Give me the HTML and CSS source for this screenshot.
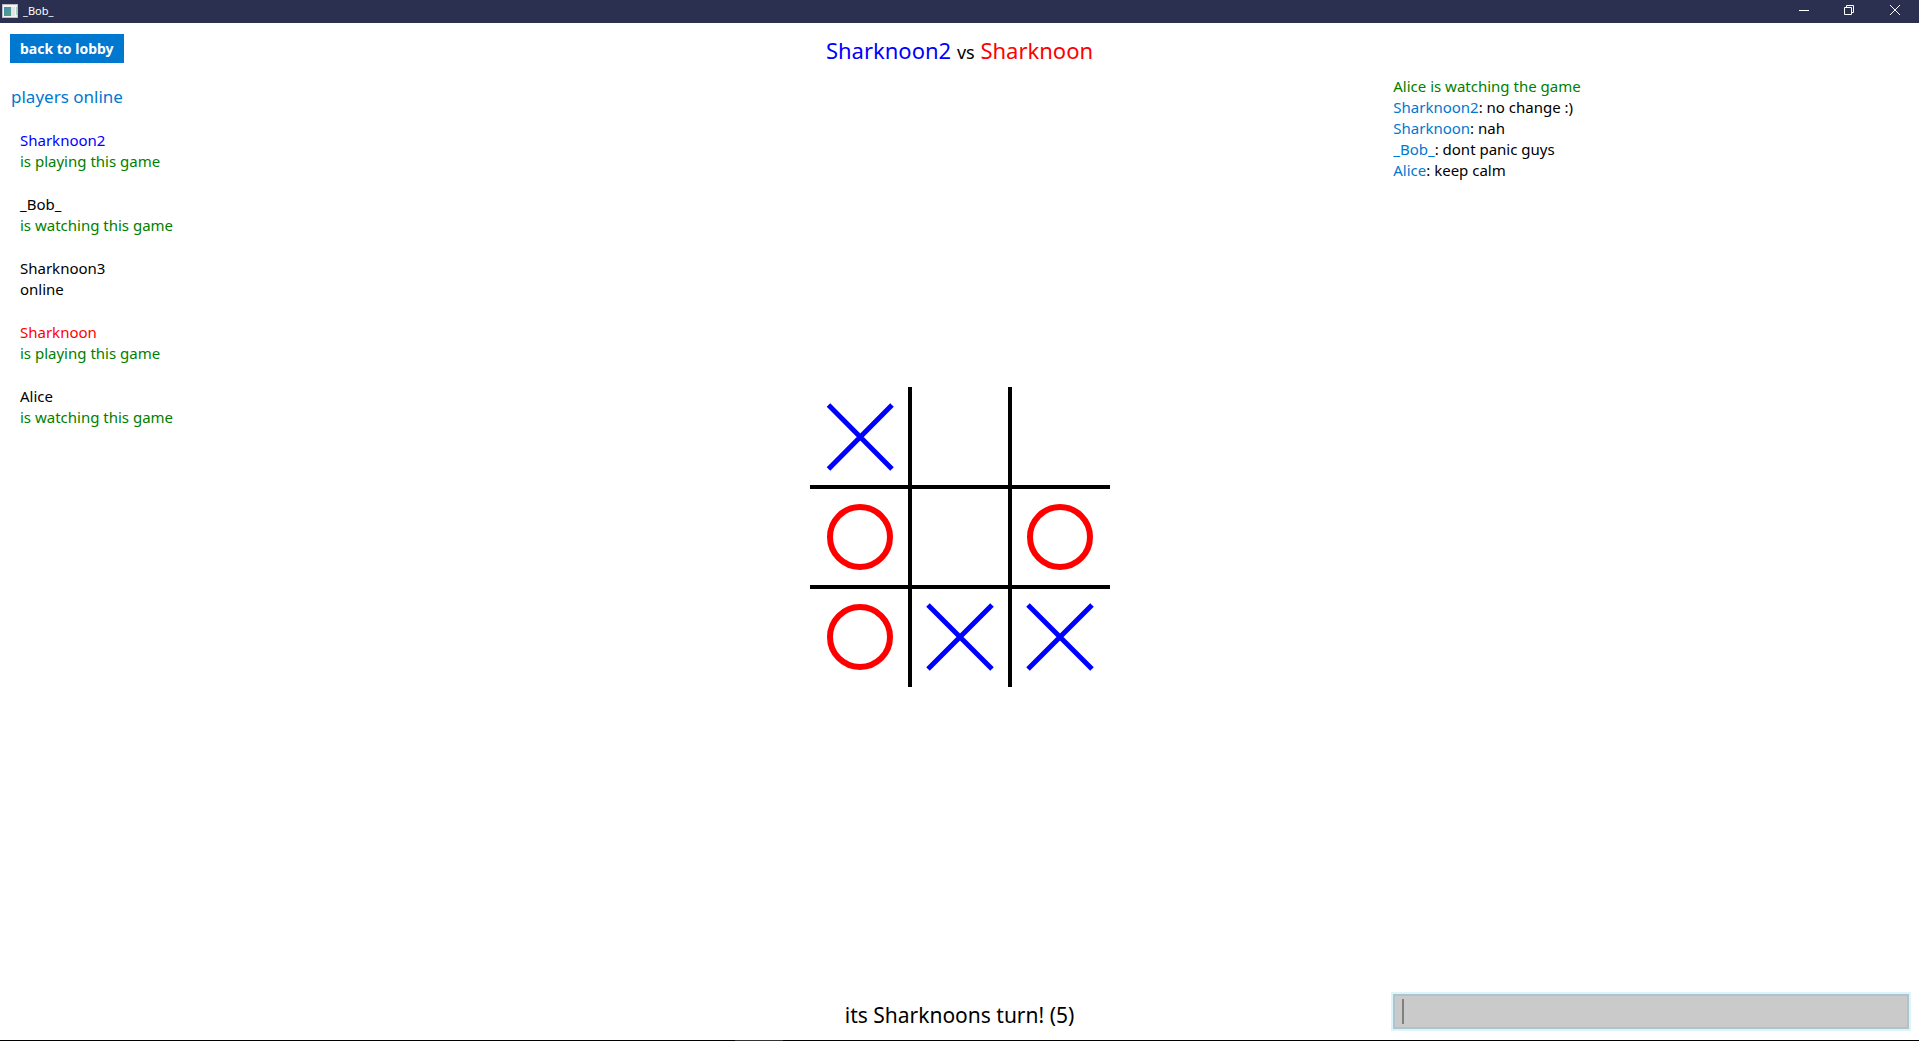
FILE: index.html
```html
<!DOCTYPE html>
<html lang="en">
<head>
<meta charset="utf-8">
<title>_Bob_</title>
<link rel="stylesheet" href="styles.css">
</head>
<body>
<header class="titlebar">
  <svg class="app-icon" width="16" height="14" viewBox="0 0 16 14" aria-hidden="true">
    <defs><linearGradient id="pane" x1="0" y1="0" x2="1" y2="1"><stop offset="0" stop-color="#4d86b8"/><stop offset="1" stop-color="#4fa47c"/></linearGradient></defs>
    <rect width="16" height="14" fill="#b9bcc4"/>
    <rect x="1" y="1" width="14" height="12" fill="#f4f4f4"/>
    <rect x="2" y="3" width="7" height="9" fill="url(#pane)"/>
    <rect x="9" y="3" width="4" height="9" fill="#e3e4e6"/>
    <rect x="14" y="3" width="1" height="8" fill="#a9d0c0"/>
  </svg>
  <span class="window-title">_Bob_</span>
  <div class="window-controls">
    <button class="window-button" aria-label="Minimize"><svg width="10" height="10" viewBox="0 0 10 10"><path d="M0 5.5H10"/></svg></button>
    <button class="window-button" aria-label="Restore"><svg width="10" height="10" viewBox="0 0 10 10"><path d="M.5 2.5H7.500V9.500H.5ZM2.500 2.500V.5H9.500V7.500H7.500"/></svg></button>
    <button class="window-button" aria-label="Close"><svg width="10" height="10" viewBox="0 0 10 10"><path d="M0 0L10 10M10 0L0 10"/></svg></button>
  </div>
</header>
<main class="game">
  <aside class="sidebar">
    <button class="lobby-button">back to lobby</button>
    <h2 class="players-title">players online</h2>
    <ul class="players">
      <li><div class="blue">Sharknoon2</div><div class="green">is playing this game</div></li>
      <li><div>_Bob_</div><div class="green">is watching this game</div></li>
      <li><div>Sharknoon3</div><div>online</div></li>
      <li><div class="red">Sharknoon</div><div class="green">is playing this game</div></li>
      <li><div>Alice</div><div class="green">is watching this game</div></li>
    </ul>
  </aside>
  <section class="match">
    <h1 class="versus"><span class="blue">Sharknoon2</span> <span class="vs">vs</span> <span class="red">Sharknoon</span></h1>
    <div class="board-area">
      <svg class="board" width="300" height="300" viewBox="0 0 300 300" role="img" aria-label="Tic-tac-toe board">
        <path class="lines" d="M100 0V300M200 0V300M0 100H300M0 200H300"/>
        <path class="cross" d="M18.500 18L82 82M82 18L18.500 82"/>
        <path class="cross" d="M118 218L182 282M182 218L118 282"/>
        <path class="cross" d="M218 218L282 282M282 218L218 282"/>
        <circle class="nought" cx="50" cy="150" r="30"/>
        <circle class="nought" cx="250" cy="150" r="30"/>
        <circle class="nought" cx="50" cy="250" r="30"/>
      </svg>
    </div>
    <p class="status">its Sharknoons turn! (5)</p>
  </section>
  <section class="chat">
    <div class="messages">
      <p class="green">Alice is watching the game</p>
      <p><span class="author">Sharknoon2</span>: no change :)</p>
      <p><span class="author">Sharknoon</span>: nah</p>
      <p><span class="author">_Bob_</span>: dont panic guys</p>
      <p><span class="author">Alice</span>: keep calm</p>
    </div>
    <div class="composer">
      <input class="message-input" type="text" aria-label="Message">
      <span class="caret"></span>
    </div>
  </section>
</main>
<footer class="edge"><div class="edge-active"></div></footer>
</body>
</html>
```
FILE: styles.css
```css
* { box-sizing: border-box; }

body {
  margin: 0;
  min-height: 100vh;
  display: flex;
  flex-direction: column;
  background: #fff;
  color: #000;
  font: 15px/21px "Noto Sans", "Open Sans", sans-serif;
}

h1, h2, p, ul { margin: 0; padding: 0; font-weight: 400; }
ul { list-style: none; }
button { border: 0; padding: 0; font: inherit; }

.blue { color: #00f; }
.red { color: #f00; }
.green { color: #008000; }
.author { color: #0078cf; }

.titlebar {
  display: flex;
  align-items: center;
  height: 23px;
  padding: 0 0 2px 2px;
  background: #2b3050;
  color: #fff;
}
.window-title { margin-left: 5px; font-size: 11px; }
.window-controls { display: flex; margin-left: auto; padding-right: 1px; align-self: stretch; }
.window-button { width: 45px; background: none; padding-bottom: 1px; line-height: 0; }
.window-button:last-child { width: 47px; }
.window-button svg { fill: none; stroke: #fff; }

.game {
  flex: 1;
  display: grid;
  grid-template-columns: 3fr 5fr 3fr;
  gap: 4px;
  padding: 11px 10px;
}

.lobby-button {
  height: 29px;
  padding: 0 10px;
  background: #0078cf;
  color: #fff;
  font-size: 14px;
  font-weight: 700;
}
.players-title {
  margin: 21px 1px;
  color: #0078cf;
  font-size: 17px;
  line-height: 25px;
}
.players { display: grid; gap: 22px; padding: 0 10px; }

.match { display: flex; flex-direction: column; text-align: center; }
.versus { padding-bottom: 4px; font-size: 22px; line-height: 32px; }
.vs { font-size: 18px; }
.board-area { flex: 1; display: grid; place-items: center; padding-left: 1px; }
.board { display: block; fill: none; }
.lines { stroke: #000; stroke-width: 4; }
.cross { stroke: #00f; stroke-width: 5; }
.nought { stroke: #f00; stroke-width: 6; }
.status { font-size: 21px; line-height: 28px; }

.chat { display: flex; flex-direction: column; padding-top: 42px; }
.messages { flex: 1; }
.composer { position: relative; }
.message-input {
  display: block;
  width: 100%;
  height: 35px;
  padding: 0 8px;
  border: 2px solid #adc4cc;
  outline: none;
  background: #cacaca;
  box-shadow: 0 0 0 2px #dff3fa;
  font: inherit;
}
.caret {
  position: absolute;
  left: 9px;
  top: 5px;
  width: 2px;
  height: 25px;
  background: #808080;
}

.edge { height: 1px; background: #000; }
.edge-active { width: 48px; height: 1px; margin-left: 735px; background: #333; }
```
